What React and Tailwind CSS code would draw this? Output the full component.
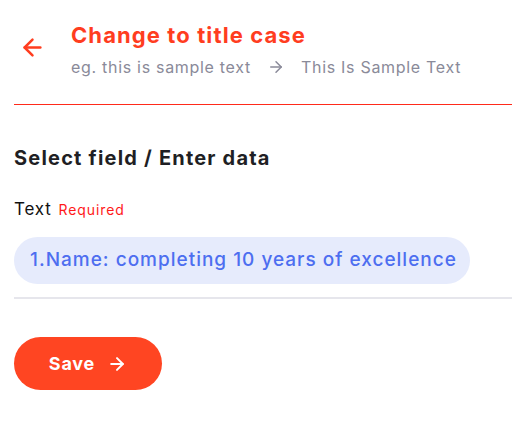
import React from "react";
import { ArrowLeft, ArrowRight } from "lucide-react";

export default function App() {
  return (
    <div className="w-[512px] h-[430px] bg-white font-['Inter',sans-serif] overflow-hidden">
      {/* Header */}
      <div className="ml-[14px] h-[105px] border-b border-[#ff2a1a] flex items-start">
        <div className="pl-[5px] pt-[34px] w-[57px] shrink-0">
          <ArrowLeft size={27} strokeWidth={2.2} className="text-[#ff3d1f]" />
        </div>
        <div className="pt-[20px]">
          <h1 className="text-[22px] leading-[30px] font-bold text-[#ff3d1f] tracking-[1.1px]">
            Change to title case
          </h1>
          <div className="mt-[6px] flex items-center text-[16px] leading-[22px] text-[#8a8a99] tracking-[0.7px]">
            <span>eg. this is sample text</span>
            <ArrowRight size={18} strokeWidth={2} className="mx-[16px] text-[#8a8a99]" />
            <span>This Is Sample Text</span>
          </div>
        </div>
      </div>

      {/* Form */}
      <div className="ml-[14px] pt-[40px]">
        <h2 className="text-[20px] leading-[26px] font-bold text-[#1f1f24] tracking-[1.2px]">Select field / Enter data</h2>
        <div className="mt-[26px] flex items-baseline gap-[7px]">
          <span className="text-[17px] leading-[24px] text-[#111] tracking-[0.8px]">Text</span>
          <span className="text-[14px] text-[#ff1a1a] tracking-[0.9px]">Required</span>
        </div>
        <div className="mt-[16px] pb-[13px] border-b-2 border-[#e6e6ec]">
          <div className="w-[456px] h-[47px] rounded-full bg-[#e6ebfc] flex items-center pl-[16px]">
            <span className="text-[19px] text-[#4d6ef0] font-medium tracking-[1px]">1.Name: completing 10 years of excellence</span>
          </div>
        </div>
        <button className="mt-[38px] w-[148px] h-[53px] rounded-full bg-[#ff4522] flex items-center justify-center gap-[12px] text-white">
          <span className="text-[18px] font-bold tracking-[0.8px]">Save</span>
          <ArrowRight size={20} strokeWidth={2.4} />
        </button>
      </div>
    </div>
  );
}
